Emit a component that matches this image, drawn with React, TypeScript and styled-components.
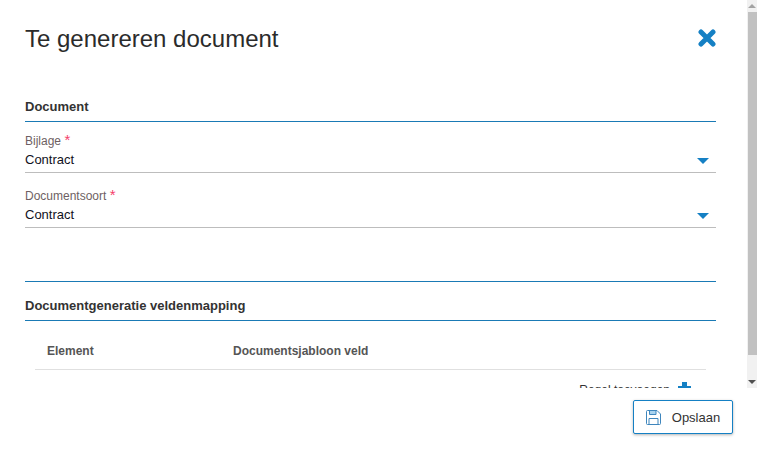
import React from "react";
import styled, { createGlobalStyle } from "styled-components";

const GlobalStyle = createGlobalStyle`
  html, body {
    margin: 0;
    padding: 0;
    background: #ffffff;
    overflow: hidden;
  }
  body {
    font-family: "Liberation Sans", Arial, sans-serif;
    color: #333333;
  }
`;

function CloseIcon() {
  return (
    <svg width="18" height="18" viewBox="0 0 18 18">
      <path
        d="M3 3 L15 15 M15 3 L3 15"
        fill="none"
        stroke="#1580c4"
        strokeWidth="5"
        strokeLinecap="round"
      />
    </svg>
  );
}

function SaveIcon() {
  return (
    <svg width="15" height="15" viewBox="0 0 15 15" fill="none">
      <path d="M0.5 1.5 a1 1 0 0 1 1 -1 H11 L14.5 4 V13.5 a1 1 0 0 1 -1 1 H1.5 a1 1 0 0 1 -1 -1 Z" fill="#ffffff" stroke="#3f86bd" />
      <path d="M3.5 1 V4.5 H10 V1" stroke="#3f86bd" fill="#a9d3ef" />
      <path d="M3 14 V8.5 H12 V14" stroke="#3f86bd" fill="#ffffff" />
    </svg>
  );
}

function Field({ label, value }: { label: string; value: string }) {
  return (
    <FieldRow>
      <FieldLabel>
        {label} <Required>*</Required>
      </FieldLabel>
      <FieldValue>
        {value}
        <Caret />
      </FieldValue>
    </FieldRow>
  );
}

export default function App() {
  return (
    <Page>
      <GlobalStyle />
      <Main>
        <Content>
          <HeaderRow>
            <Title>Te genereren document</Title>
            <CloseButton aria-label="Sluiten">
              <CloseIcon />
            </CloseButton>
          </HeaderRow>
          <SectionTitle>Document</SectionTitle>
          <Fields>
            <Field label="Bijlage" value="Contract" />
            <Field label="Documentsoort" value="Contract" />
          </Fields>
          <Divider />
          <SectionTitle>Documentgeneratie veldenmapping</SectionTitle>
          <TableHead>
            <ElementCol>Element</ElementCol>
            <span>Documentsjabloon veld</span>
          </TableHead>
          <AddRow>
            Regel toevoegen
            <PlusIcon />
          </AddRow>
        </Content>
        <Scrollbar>
          <ArrowButton>
            <ArrowUp />
          </ArrowButton>
          <Thumb />
          <ArrowButton>
            <ArrowDown />
          </ArrowButton>
        </Scrollbar>
      </Main>
      <Footer>
        <SaveButton>
          <SaveIcon />
          Opslaan
        </SaveButton>
      </Footer>
    </Page>
  );
}

const Page = styled.div`
  width: 757px;
  height: 455px;
  display: flex;
  flex-direction: column;
`;

const Main = styled.div`
  height: 388px;
  display: flex;
  overflow: hidden;
`;

const Content = styled.div`
  flex: 1;
  padding: 0 31px 0 25px;
  overflow: hidden;
`;

const HeaderRow = styled.div`
  height: 83px;
  padding-top: 22px;
  box-sizing: border-box;
  display: flex;
  justify-content: space-between;
  align-items: flex-start;
`;

const Title = styled.h1`
  margin: 0;
  font-size: 24px;
  font-weight: 400;
  line-height: 34px;
  color: #2b2b2b;
`;

const CloseButton = styled.button`
  border: 0;
  padding: 0;
  margin: 7px 0 0;
  background: none;
  display: flex;
`;

const SectionTitle = styled.div`
  height: 39px;
  box-sizing: border-box;
  padding-top: 16px;
  line-height: 15px;
  font-size: 13px;
  font-weight: 700;
  color: #333333;
  border-bottom: 1px solid #1a7ab5;
`;

const Fields = styled.div`
  display: flex;
  flex-direction: column;
  gap: 4px;
`;

const FieldRow = styled.div`
  height: 51px;
  padding-top: 10px;
  box-sizing: border-box;
  border-bottom: 1px solid #bdbdbd;
`;

const FieldLabel = styled.div`
  font-size: 12px;
  line-height: 16px;
  color: #6e5f63;
`;

const Required = styled.span`
  color: #f5406a;
  font-size: 15px;
`;

const FieldValue = styled.div`
  margin-top: 3px;
  font-size: 13px;
  line-height: 16px;
  color: #111122;
  display: flex;
  justify-content: space-between;
  align-items: center;
  padding-right: 7px;
`;

const Caret = styled.span`
  width: 0;
  height: 0;
  border-left: 6px solid transparent;
  border-right: 6px solid transparent;
  border-top: 6px solid #1580c4;
  margin-top: 2px;
`;

const Divider = styled.div`
  height: 54px;
  box-sizing: border-box;
  border-bottom: 1px solid #1a7ab5;
`;

const TableHead = styled.div`
  margin: 0 10px;
  height: 49px;
  box-sizing: border-box;
  padding: 23px 0 0 12px;
  border-bottom: 1px solid #e0e0e0;
  display: flex;
  font-size: 12px;
  font-weight: 700;
  line-height: 14px;
  color: #555555;
`;

const ElementCol = styled.span`
  width: 186px;
`;

const AddRow = styled.div`
  margin: 12px 25px 0 0;
  display: flex;
  justify-content: flex-end;
  align-items: center;
  gap: 8px;
  font-size: 12px;
  line-height: 14px;
  color: #333333;
`;

const PlusIcon = styled.span`
  width: 13px;
  height: 13px;
  margin-bottom: 2px;
  background:
    linear-gradient(#1580c4, #1580c4) center / 13px 5px no-repeat,
    linear-gradient(#1580c4, #1580c4) center / 5px 13px no-repeat;
`;

const Scrollbar = styled.div`
  width: 10px;
  background: #f1f1f1;
  display: flex;
  flex-direction: column;
  align-items: stretch;
`;

const ArrowButton = styled.div`
  height: 12px;
  display: flex;
  align-items: center;
  justify-content: center;
`;

const ArrowUp = styled.span`
  border-left: 4px solid transparent;
  border-right: 4px solid transparent;
  border-bottom: 4px solid #a3a3a3;
`;

const ArrowDown = styled.span`
  border-left: 4px solid transparent;
  border-right: 4px solid transparent;
  border-top: 4px solid #505050;
`;

const Thumb = styled.div`
  height: 343px;
  margin-left: 1px;
  background: #c1c1c1;
  margin-bottom: auto;
`;

const Footer = styled.div`
  flex: 1;
  display: flex;
  justify-content: flex-end;
  align-items: flex-start;
  padding: 12px 24px 0 0;
`;

const SaveButton = styled.button`
  width: 100px;
  height: 34px;
  box-sizing: border-box;
  display: flex;
  align-items: center;
  justify-content: center;
  gap: 11px;
  border: 1px solid #1580c4;
  border-radius: 2px;
  background: #ffffff;
  box-shadow: 0 1px 3px rgba(0, 0, 0, 0.3);
  font-family: "Liberation Sans", Arial, sans-serif;
  font-size: 13px;
  color: #333333;
`;
